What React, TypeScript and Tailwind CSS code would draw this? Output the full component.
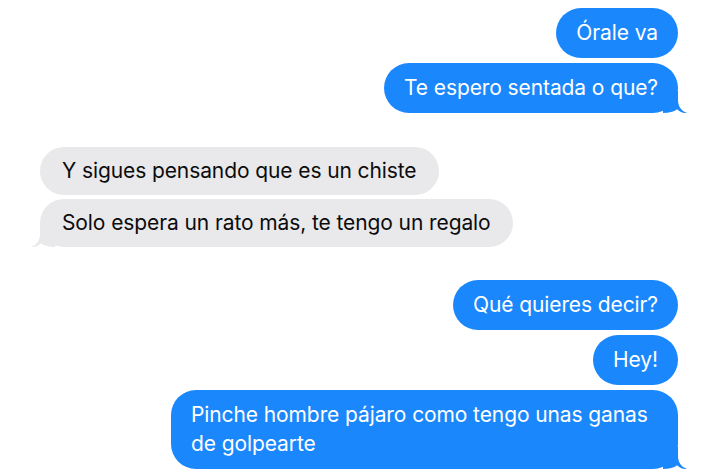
import React from "react";

const BLUE = "bg-[#1b87fc]";

function TailRight() {
  return (
    <svg
      className="absolute bottom-0 right-[-9px]"
      width="24"
      height="22"
      viewBox="0 0 24 22"
    >
      <path
        d="M0 0 L15 0 L15 9 C15 15 18 20 24 22 C20 22.2 17 21 14 18.3 C11 20.8 6 22 0 22 Z"
        fill="#1b87fc"
      />
    </svg>
  );
}

function TailLeft() {
  return (
    <svg
      className="absolute bottom-0 left-[-9px]"
      width="24"
      height="22"
      viewBox="0 0 24 22"
      style={{ transform: "scaleX(-1)" }}
    >
      <path
        d="M0 0 L15 0 L15 9 C15 15 18 20 24 22 C20 22.2 17 21 14 18.3 C11 20.8 6 22 0 22 Z"
        fill="#e9e9eb"
      />
    </svg>
  );
}

function Sent({ children, tail, className = "" }: { children: React.ReactNode; tail?: boolean; className?: string }) {
  return (
    <div className={`relative ${BLUE} text-white rounded-[25px] px-[20px] pt-[10px] pb-[11px] ${className}`}>
      {tail && <TailRight />}
      <div className="relative">{children}</div>
    </div>
  );
}

function Received({ children, tail }: { children: React.ReactNode; tail?: boolean }) {
  return (
    <div className="relative bg-[#e9e9eb] text-[#0c0c0c] rounded-[24px] px-[22px] pt-[9px] pb-[10px]">
      {tail && <TailLeft />}
      <div className="relative">{children}</div>
    </div>
  );
}

export default function App() {
  return (
    <div
      className="w-[720px] h-[476px] bg-white overflow-hidden pl-[40px] pr-[42px] pt-[8px] text-[21px] leading-[29px] tracking-[-0.1px]"
      style={{ fontFamily: "Inter, 'Noto Sans', sans-serif" }}
    >
      <div className="flex flex-col items-end gap-[5px]">
        <Sent>Órale va</Sent>
        <Sent tail>Te espero sentada o que?</Sent>
      </div>
      <div className="flex flex-col items-start gap-[4px] mt-[34px]">
        <Received>Y sigues pensando que es un chiste</Received>
        <Received tail>Solo espera un rato más, te tengo un regalo</Received>
      </div>
      <div className="flex flex-col items-end gap-[5px] mt-[33px]">
        <Sent>Qué quieres decir?</Sent>
        <Sent>Hey!</Sent>
        <Sent tail className="w-[507px]">
          Pinche hombre pájaro como tengo unas ganas
          <br />
          de golpearte
        </Sent>
      </div>
    </div>
  );
}
